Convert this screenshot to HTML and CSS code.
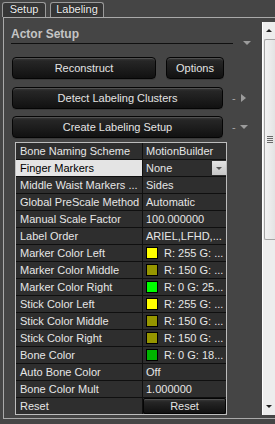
FILE: index.html
```html
<!DOCTYPE html>
<html lang="en">
<head>
    <meta charset="UTF-8">
    <title>Actor Setup</title>
    <link rel="stylesheet" href="styles.css">
</head>
<body>
    <div class="tabs">
        <div class="tab tab-setup">Setup</div>
        <div class="tab tab-labeling">Labeling</div>
    </div>

    <div class="panel">
        <div class="content">
            <!-- titre de section -->
            <div class="section-head">
                <div class="section-title">Actor Setup</div>
                <div class="section-rule-row">
                    <div class="section-rule"></div>
                    <span class="arrow-down"></span>
                </div>
            </div>

            <div class="btn-row row-1">
                <button class="btn btn-reconstruct">Reconstruct</button>
                <button class="btn btn-options">Options</button>
            </div>
            <div class="btn-row row-2">
                <button class="btn btn-wide">Detect Labeling Clusters</button>
                <span class="expander">-<span class="arrow-right"></span></span>
            </div>
            <div class="btn-row row-3">
                <button class="btn btn-wide">Create Labeling Setup</button>
                <span class="expander">-<span class="arrow-down small"></span></span>
            </div>

            <!-- proprietes -->
            <div class="props">
                <div class="cell label">Bone Naming Scheme</div>
                <div class="cell value">MotionBuilder</div>

                <div class="cell label selected">Finger Markers</div>
                <div class="cell value combo">None<span class="combo-btn"></span></div>

                <div class="cell label">Middle Waist Markers ...</div>
                <div class="cell value">Sides</div>

                <div class="cell label">Global PreScale Method</div>
                <div class="cell value">Automatic</div>

                <div class="cell label">Manual Scale Factor</div>
                <div class="cell value">100.000000</div>

                <div class="cell label">Label Order</div>
                <div class="cell value">ARIEL,LFHD,...</div>

                <div class="cell label">Marker Color Left</div>
                <div class="cell value"><span class="swatch yellow"></span>R: 255 G: ...</div>

                <div class="cell label">Marker Color Middle</div>
                <div class="cell value"><span class="swatch olive"></span>R: 150 G: ...</div>

                <div class="cell label">Marker Color Right</div>
                <div class="cell value"><span class="swatch green"></span>R: 0 G: 25...</div>

                <div class="cell label">Stick Color Left</div>
                <div class="cell value"><span class="swatch yellow"></span>R: 255 G: ...</div>

                <div class="cell label">Stick Color Middle</div>
                <div class="cell value"><span class="swatch olive"></span>R: 150 G: ...</div>

                <div class="cell label">Stick Color Right</div>
                <div class="cell value"><span class="swatch olive"></span>R: 150 G: ...</div>

                <div class="cell label">Bone Color</div>
                <div class="cell value"><span class="swatch bone"></span>R: 0 G: 18...</div>

                <div class="cell label">Auto Bone Color</div>
                <div class="cell value">Off</div>

                <div class="cell label">Bone Color Mult</div>
                <div class="cell value">1.000000</div>

                <div class="cell label">Reset</div>
                <div class="cell value btn-cell"><button class="btn btn-reset">Reset</button></div>
            </div>
        </div>

        <div class="scrollbar">
            <div class="sb-arrow up"></div>
            <div class="sb-thumb"><span class="grip"></span></div>
            <div class="sb-space"></div>
            <div class="sb-arrow down"></div>
        </div>
    </div>
</body>
</html>
```

FILE: styles.css
```css
html, body {
    margin: 0;
    padding: 0;
}
body {
    width: 275px;
    height: 424px;
    overflow: hidden;
    background-color: #454545;
    font-family: 'Liberation Sans', Arial, sans-serif;
    font-size: 11px;
    color: #e6e6e6;
}
.tabs {
    display: flex;
    height: 15px;
    padding: 2px 0 0 2px;
    gap: 4px;
}
.tab {
    box-sizing: border-box;
    height: 15px;
    border: 1px solid #9a9a9a;
    border-bottom: none;
    border-radius: 3px 3px 0 0;
    background-color: #363636;
    color: #f2f2f2;
    line-height: 13px;
    text-align: center;
    text-shadow: 0 0 1px #000;
}
.tab-setup {
    width: 44px;
}
.tab-labeling {
    width: 54px;
}
.panel {
    display: flex;
    margin-left: 3px;
    height: 400px;
    border-top: 1px solid #a9a9a9;
    border-left: 1px solid #a9a9a9;
    border-bottom: 1px solid #a9a9a9;
}
.content {
    flex: 0 0 258px;
    box-sizing: border-box;
    padding: 9px 0 0 7px;
}
.section-title {
    font-size: 12px;
    font-weight: bold;
    line-height: 14px;
    color: #c4c4c4;
}
.section-rule-row {
    display: flex;
    align-items: center;
    height: 4px;
}
.section-rule {
    width: 222px;
    height: 1px;
    background-color: #101010;
}
.arrow-down {
    width: 0;
    height: 0;
    margin-left: 10px;
    border-left: 4px solid transparent;
    border-right: 4px solid transparent;
    border-top: 4px solid #9c9c9c;
}
.arrow-down.small {
    margin-left: 4px;
}
.arrow-right {
    display: inline-block;
    width: 0;
    height: 0;
    margin-left: 5px;
    border-top: 4px solid transparent;
    border-bottom: 4px solid transparent;
    border-left: 5px solid #9c9c9c;
}
.btn-row {
    display: flex;
    align-items: center;
    padding-left: 1px;
}
.row-1 {
    margin-top: 12px;
}
.row-2 {
    margin-top: 8px;
}
.row-3 {
    margin-top: 7px;
}
.btn {
    box-sizing: border-box;
    height: 22px;
    padding: 0;
    border: 1px solid #050505;
    border-radius: 4px;
    background: linear-gradient(#3c3c3c 0, #262626 3px, #1b1b1b 60%, #111111 100%);
    box-shadow: inset 0 1px 0 #505050, 0 1px 0 #3a3a3a;
    color: #e4e4e4;
    font-family: 'Liberation Sans', Arial, sans-serif;
    font-size: 11px;
}
.btn-reconstruct {
    width: 144px;
}
.btn-options {
    width: 58px;
    margin-left: 10px;
}
.btn-wide {
    width: 211px;
}
.expander {
    display: flex;
    align-items: center;
    margin-left: 9px;
    color: #a8a8a8;
    font-size: 11px;
}
.props {
    display: grid;
    grid-template-columns: 126px 83px;
    grid-auto-rows: 16px;
    gap: 1px;
    width: 210px;
    margin: 4px 0 0 4px;
    background-color: #0f0f0f;
    border: 1px solid #bdbdbd;
}
.cell {
    display: flex;
    align-items: center;
    padding-left: 4px;
    background-color: #2e2e2e;
    white-space: nowrap;
    overflow: hidden;
    line-height: 16px;
}
.value {
    padding-left: 3px;
}
.label.selected {
    background-color: #e4e4e4;
    color: #000;
}
.combo {
    position: relative;
}
.combo-btn {
    position: absolute;
    right: 0;
    top: 1px;
    width: 14px;
    height: 14px;
    background: linear-gradient(#e4e4e4, #c6c6c6);
}
.combo-btn::after {
    content: "";
    position: absolute;
    left: 4px;
    top: 6px;
    border-left: 3px solid transparent;
    border-right: 3px solid transparent;
    border-top: 3px solid #555;
}
.swatch {
    box-sizing: border-box;
    width: 12px;
    height: 12px;
    margin-right: 6px;
    border: 1px solid #000;
}
.yellow {
    background-color: #ffff00;
}
.olive {
    background-color: #969600;
}
.green {
    background-color: #00ff00;
}
.bone {
    background-color: #00b400;
}
.btn-cell {
    padding: 0;
}
.btn-reset {
    width: 100%;
    height: 16px;
    border-radius: 2px;
}
.scrollbar {
    display: flex;
    flex-direction: column;
    flex: 0 0 17px;
    margin: 4px 0 3px;
    border-left: 1px solid #ffffff;
    background-color: #ededed;
}
.sb-arrow {
    position: relative;
    height: 17px;
}
.sb-arrow.up::after, .sb-arrow.down::after {
    content: "";
    position: absolute;
    left: 3px;
    border-left: 3px solid transparent;
    border-right: 3px solid transparent;
}
.sb-arrow.up::after {
    top: 7px;
    border-bottom: 3px solid #222;
}
.sb-arrow.down::after {
    top: 7px;
    border-top: 3px solid #222;
}
.sb-thumb {
    display: flex;
    align-items: center;
    height: 199px;
    margin-left: 1px;
    border: 1px solid #a4a4a4;
    border-right: none;
    border-radius: 2px 0 0 2px;
    background: linear-gradient(90deg, #f2f2f2, #dcdcdc);
}
.grip {
    width: 6px;
    height: 7px;
    margin-left: 2px;
    background: repeating-linear-gradient(#6a6a6a 0, #6a6a6a 1px, transparent 1px, transparent 2px);
}
.sb-space {
    flex: 1;
}
```
